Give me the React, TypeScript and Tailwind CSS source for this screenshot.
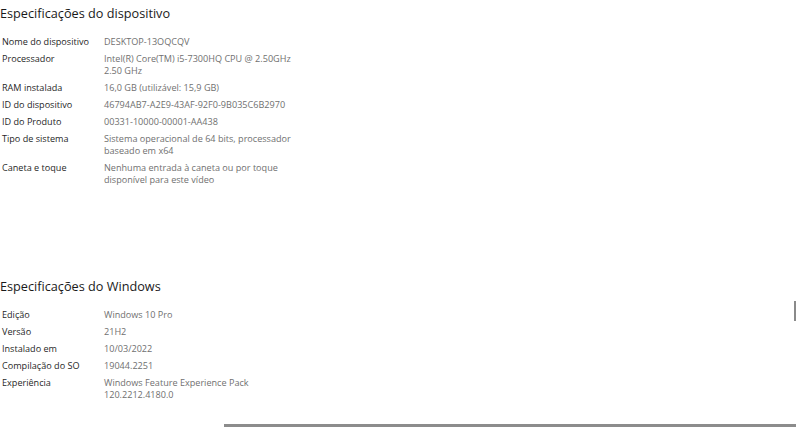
type Spec = { label: string; value: string[] };

const device: Spec[] = [
  { label: "Nome do dispositivo", value: ["DESKTOP-13OQCQV"] },
  { label: "Processador", value: ["Intel(R) Core(TM) i5-7300HQ CPU @ 2.50GHz", "2.50 GHz"] },
  { label: "RAM instalada", value: ["16,0 GB (utilizável: 15,9 GB)"] },
  { label: "ID do dispositivo", value: ["46794AB7-A2E9-43AF-92F0-9B035C6B2970"] },
  { label: "ID do Produto", value: ["00331-10000-00001-AA438"] },
  { label: "Tipo de sistema", value: ["Sistema operacional de 64 bits, processador", "baseado em x64"] },
  { label: "Caneta e toque", value: ["Nenhuma entrada à caneta ou por toque", "disponível para este vídeo"] },
];

const windows: Spec[] = [
  { label: "Edição", value: ["Windows 10 Pro"] },
  { label: "Versão", value: ["21H2"] },
  { label: "Instalado em", value: ["10/03/2022"] },
  { label: "Compilação do SO", value: ["19044.2251"] },
  { label: "Experiência", value: ["Windows Feature Experience Pack", "120.2212.4180.0"] },
];

function SpecTable({ rows }: { rows: Spec[] }) {
  return (
    <div className="flex flex-col gap-[5px]">
      {rows.map((r) => (
        <div key={r.label} className="flex text-[9.1px] leading-[12px]">
          <div className="w-[104px] shrink-0 whitespace-nowrap pl-[2px] text-[#1f1f1f]">{r.label}</div>
          <div className="whitespace-nowrap text-[#707070]">
            {r.value.map((line) => (
              <div key={line}>{line}</div>
            ))}
          </div>
        </div>
      ))}
    </div>
  );
}

export default function App() {
  return (
    <div className="relative h-[427px] w-[800px] overflow-hidden bg-white font-['Open_Sans',sans-serif]">
      <section className="pt-[3px]">
        <h2 className="text-[12.7px] leading-[20px] text-[#1a1a1a]">Especificações do dispositivo</h2>
        <div className="mt-[13px]">
          <SpecTable rows={device} />
        </div>
      </section>
      <section className="mt-[90px]">
        <h2 className="text-[12.7px] leading-[20px] text-[#1a1a1a]">Especificações do Windows</h2>
        <div className="mt-[13px]">
          <SpecTable rows={windows} />
        </div>
      </section>

      {/* scrollbar thumb and bottom edge */}
      <div className="absolute right-[4px] top-[301px] h-[20px] w-[2px] bg-[#8a8a8a]" />
      <div className="absolute bottom-0 left-[224px] h-[3px] w-[572px] bg-[#8c8c8c]" />
    </div>
  );
}
